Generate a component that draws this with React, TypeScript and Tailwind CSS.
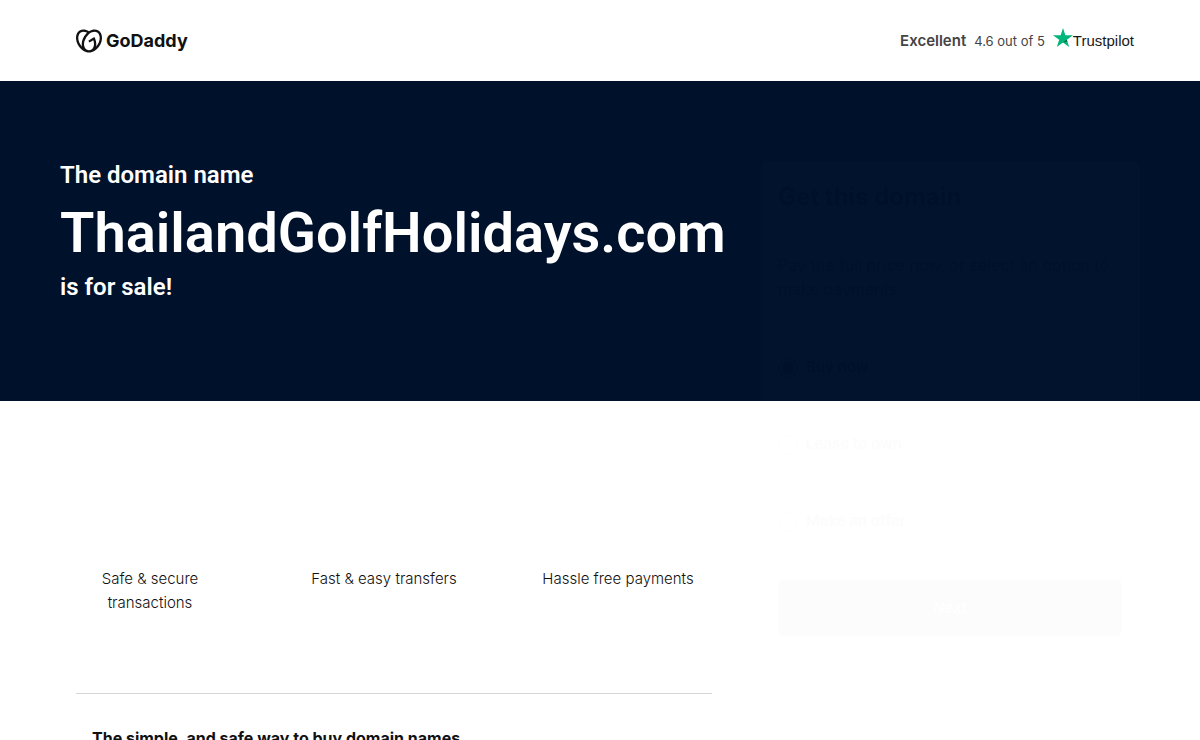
import { useId } from "react";
import { SiGodaddy } from "react-icons/si";

const features = ["Safe & secure transactions", "Fast & easy transfers", "Hassle free payments"];

const plans = ["Buy now", "Lease to own", "Make an offer"];

function GoDaddyLogo() {
  return (
    <a href="#" aria-label="GoDaddy" className="flex items-center gap-1 text-[#111111]">
      <SiGodaddy size={26} />
      <span className="text-lg leading-6 font-bold">GoDaddy</span>
    </a>
  );
}

function TrustScore() {
  return (
    <div className="flex items-center gap-2 text-[#444444]">
      <span className="text-[15px] leading-6 font-semibold">Excellent</span>
      <span className="text-[13px] leading-6">4.6 out of 5</span>
      <a href="#" className="flex items-center text-[#191919]">
        <svg viewBox="0 0 20 19" className="mb-1.5 h-[19px] w-5">
          <path fill="#00b67a" d="M10 0l2.360 7.250H20l-6.180 4.490L16.180 19 10 14.500 3.820 19l2.360-7.260L0 7.250h7.640z" />
          <path fill="#005128" d="M14.350 13.370l-.530-1.630L10 14.500z" />
        </svg>
        <span className="font-['Liberation_Sans',sans-serif] text-[15px] leading-6">Trustpilot</span>
      </a>
    </div>
  );
}

function PurchaseCard() {
  const group = useId();

  return (
    <aside className="-mt-60 w-[380px] shrink-0 rounded-lg bg-white px-[18px] py-5 text-black opacity-[0.007]">
      <h2 className="text-2xl leading-8 font-bold">Get this domain</h2>
      <p className="mt-10 text-base leading-6">Pay the full price now, or select an option to make payments.</p>
      <div className="mt-7 flex flex-col">
        {plans.map((plan, i) => (
          <label key={plan} className="flex h-[77px] items-center gap-2 text-[15px] font-semibold">
            <input type="radio" name={group} defaultChecked={i === 0} className="size-5 accent-black" />
            {plan}
          </label>
        ))}
      </div>
      <button className="mt-5 h-14 w-full rounded-md bg-black text-[15px] font-semibold text-white">Next</button>
    </aside>
  );
}

export default function App() {
  return (
    <div className="min-h-screen bg-white font-['Inter',sans-serif] text-[#111111]">
      <header className="flex h-[81px] items-center justify-between pr-[66px] pl-[76px]">
        <GoDaddyLogo />
        <TrustScore />
      </header>

      <section className="h-80 bg-[#00112b] px-[60px] pt-20 font-['Roboto',sans-serif] text-white">
        <h1 className="flex flex-col font-semibold">
          <span className="text-2xl leading-7">The domain name</span>
          <span className="pt-1 text-[56px] leading-[80px]">ThailandGolfHolidays.com</span>
          <span className="text-2xl leading-7">is for sale!</span>
        </h1>
      </section>

      <div className="flex items-start justify-between px-[60px]">
        <main className="w-[668px] px-4 pt-[166px]">
          <ul className="-ml-1 flex justify-between pr-4 pb-[78px] text-center text-[15px] leading-6 font-light">
            {features.map((feature) => (
              <li key={feature} className="w-[156px]">
                {feature}
              </li>
            ))}
          </ul>
          <section className="border-t border-[#d6d6d6] px-4 pt-8">
            <h2 className="text-base leading-6 font-bold">The simple, and safe way to buy domain names</h2>
          </section>
        </main>
        <PurchaseCard />
      </div>
    </div>
  );
}
